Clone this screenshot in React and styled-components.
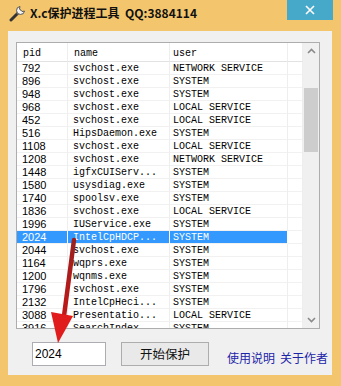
import React from 'react';
import styled, { createGlobalStyle } from 'styled-components';

const rows = [
  ['792', 'svchost.exe', 'NETWORK SERVICE'],
  ['896', 'svchost.exe', 'SYSTEM'],
  ['948', 'svchost.exe', 'SYSTEM'],
  ['968', 'svchost.exe', 'LOCAL SERVICE'],
  ['452', 'svchost.exe', 'LOCAL SERVICE'],
  ['516', 'HipsDaemon.exe', 'SYSTEM'],
  ['1108', 'svchost.exe', 'LOCAL SERVICE'],
  ['1208', 'svchost.exe', 'NETWORK SERVICE'],
  ['1448', 'igfxCUIServ...', 'SYSTEM'],
  ['1580', 'usysdiag.exe', 'SYSTEM'],
  ['1740', 'spoolsv.exe', 'SYSTEM'],
  ['1836', 'svchost.exe', 'LOCAL SERVICE'],
  ['1996', 'IUService.exe', 'SYSTEM'],
  ['2024', 'IntelCpHDCP...', 'SYSTEM'],
  ['2044', 'svchost.exe', 'SYSTEM'],
  ['1164', 'wqprs.exe', 'SYSTEM'],
  ['1200', 'wqnms.exe', 'SYSTEM'],
  ['1796', 'svchost.exe', 'SYSTEM'],
  ['2132', 'IntelCpHeci...', 'SYSTEM'],
  ['3088', 'Presentatio...', 'LOCAL SERVICE'],
  ['3916', 'SearchIndex...', 'SYSTEM'],
];

const SELECTED = '2024';

const GlobalStyle = createGlobalStyle`
  html, body { margin: 0; padding: 0; }
  body { font-family: "Noto Sans CJK SC", "Noto Sans", sans-serif; }
`;

const Frame = styled.div`
  position: relative;
  width: 341px;
  height: 386px;
  background: #f3c66e;
  display: flex;
  flex-direction: column;
  overflow: hidden;
`;

const TitleBar = styled.div`
  height: 31px;
  display: flex;
  align-items: flex-start;
`;

const TitleIcon = styled.div`
  width: 22px;
  height: 26px;
  display: flex;
  align-items: center;
  justify-content: center;
  margin-left: 7px;
`;

const TitleText = styled.div`
  font-family: "Noto Sans CJK SC", "Noto Sans", sans-serif;
  font-weight: 700;
  font-size: 12px;
  line-height: 26px;
  color: #111;
  margin-left: 1px;
  white-space: pre;
  flex: 1;
`;

const CloseButton = styled.div`
  width: 46px;
  height: 20px;
  background: #47a9c9;
  margin-right: 8px;
  display: flex;
  align-items: center;
  justify-content: center;
`;

const Client = styled.div`
  flex: 1;
  margin: 0 9px 11px 8px;
  background: #f0f0f0;
  padding: 11px 0 0 8px;
  display: flex;
  flex-direction: column;
`;

const ListBox = styled.div`
  width: 302px;
  height: 285px;
  border: 1px solid #adadad;
  background: #fff;
  display: flex;
  overflow: hidden;
`;

const Table = styled.div`
  flex: 1;
  display: flex;
  flex-direction: column;
  overflow: hidden;
`;

const Row = styled.div`
  display: grid;
  grid-template-columns: 51px 102px 118px 1fr;
  height: ${p => (p.$head ? '19px' : '13px')};
  flex-shrink: 0;
  font-family: "Liberation Mono", monospace;
  font-size: 10px;
  line-height: ${p => (p.$head ? '21px' : '13px')};
  color: #000;
`;

const Cell = styled.div`
  padding-left: ${p => p.$pad}px;
  white-space: nowrap;
  overflow: hidden;
  border-right: 1px solid #eeeeee;
  border-bottom: 1px solid ${p => (p.$head ? '#e2e2e2' : '#f1f1f1')};
  box-sizing: border-box;
  font-family: ${p => (p.$sans ? '"Liberation Sans", sans-serif' : '"Liberation Mono", monospace')};
  font-size: ${p => (p.$sans ? '11px' : '10px')};
  background: ${p => (p.$sel ? '#3399ff' : 'transparent')};
  color: ${p => (p.$sel ? '#fff' : '#000')};
  border-right-color: ${p => (p.$sel ? '#fff' : '#eeeeee')};
`;

const ScrollBar = styled.div`
  width: 16px;
  background: #f0f0f0;
  display: flex;
  flex-direction: column;
`;

const Arrow = styled.div`
  height: 16px;
  display: flex;
  align-items: center;
  justify-content: center;
`;

const Track = styled.div`
  flex: 1;
  padding-top: 29px;
`;

const Thumb = styled.div`
  height: 64px;
  margin: 0 1px;
  background: #cdcdcd;
`;

const BottomBar = styled.div`
  display: flex;
  align-items: center;
  margin-top: 13px;
`;

const TextBox = styled.div`
  width: 70px;
  height: 22px;
  margin-left: 16px;
  border: 1px solid #abadb3;
  background: #fff;
  font-family: "Liberation Sans", sans-serif;
  font-size: 12px;
  line-height: 22px;
  padding-left: 2px;
  box-sizing: content-box;
  color: #000;
`;

const Button = styled.div`
  width: 86px;
  height: 22px;
  margin-left: 15px;
  border: 1px solid #adadad;
  background: #e9e9e9;
  font-size: 12.5px;
  line-height: 22px;
  text-align: center;
  color: #111;
`;

const Links = styled.div`
  margin-left: 18px;
  margin-top: 6px;
  display: flex;
  gap: 5px;
  font-size: 12px;
  color: #1c24a8;
`;

const Overlay = styled.svg`
  position: absolute;
  left: 0;
  top: 0;
  pointer-events: none;
`;

const Chevron = ({ up }) => (
  <svg width="9" height="6" viewBox="0 0 9 6">
    <path d={up ? 'M1 5 L4.5 1.5 L8 5' : 'M1 1 L4.5 4.5 L8 1'} fill="none" stroke="#8a8a8a" strokeWidth="1.6" />
  </svg>
);

export default function App() {
  return (
    <>
      <GlobalStyle />
      <Frame>
        <TitleBar>
          <TitleIcon>
            <svg width="18" height="18" viewBox="0 0 18 18">
              <path d="M2 16 L9 9" stroke="#333" strokeWidth="3" strokeLinecap="round" />
              <path d="M8 10 L12 6" stroke="#666" strokeWidth="2" />
              <path d="M11 2.5 A4 4 0 1 0 15.5 7 L13 7.5 L10.5 5 L11 2.5 Z" fill="#f5f5f5" stroke="#555" strokeWidth="1" />
            </svg>
          </TitleIcon>
          <TitleText>{'X.c保护进程工具  QQ:3884114'}</TitleText>
          <CloseButton>
            <svg width="10" height="10" viewBox="0 0 10 10">
              <path d="M1 1 L9 9 M9 1 L1 9" stroke="#fff" strokeWidth="1.6" />
            </svg>
          </CloseButton>
        </TitleBar>
        <Client>
          <ListBox>
            <Table>
              <Row $head>
                <Cell $head $pad={6}>pid</Cell>
                <Cell $head $pad={6}>name</Cell>
                <Cell $head $pad={3}>user</Cell>
                <Cell $head $pad={0} />
              </Row>
              {rows.map(([pid, name, user]) => {
                const sel = pid === SELECTED;
                return (
                  <Row key={pid + name}>
                    <Cell $pad={5} $sans $sel={sel}>{pid}</Cell>
                    <Cell $pad={5} $sel={sel}>{name}</Cell>
                    <Cell $pad={3} $sel={sel}>{user}</Cell>
                    <Cell $pad={0} />
                  </Row>
                );
              })}
            </Table>
            <ScrollBar>
              <Arrow><Chevron up /></Arrow>
              <Track><Thumb /></Track>
              <Arrow><Chevron /></Arrow>
            </ScrollBar>
          </ListBox>
          <BottomBar>
            <TextBox>2024</TextBox>
            <Button>开始保护</Button>
            <Links>
              <span>使用说明</span>
              <span>关于作者</span>
            </Links>
          </BottomBar>
        </Client>
        <Overlay width="341" height="386" viewBox="0 0 341 386">
          <defs>
            <linearGradient id="shaft" x1="0" y1="0" x2="0" y2="1">
              <stop offset="0" stopColor="#9a2020" />
              <stop offset="1" stopColor="#c01818" />
            </linearGradient>
          </defs>
          <path d="M74 240 L64 316" stroke="url(#shaft)" strokeWidth="4.5" strokeLinecap="round" />
          <path d="M51 312 L73 316 L58 343 Z" fill="#e01c1c" />
        </Overlay>
      </Frame>
    </>
  );
}
